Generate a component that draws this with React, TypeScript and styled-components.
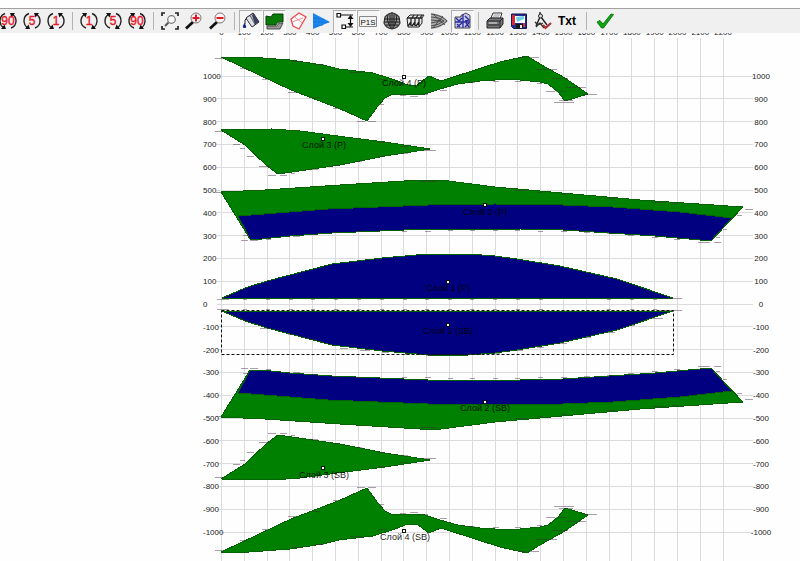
import React from 'react';
import styled, { createGlobalStyle } from 'styled-components';

const GlobalStyle = createGlobalStyle`
  * { box-sizing: border-box; }
  body { margin: 0; background: #fefefe; font-family: "Liberation Sans", Arial, sans-serif; overflow: hidden; }
`;

const Page = styled.main`
  padding-top: 8px;
`;

const Toolbar = styled.div`
  display: flex;
  align-items: center;
  height: 25px;
  border-top: 1px solid #a0a0a0;
  background: #f0f0f0;
  overflow: hidden;
`;

const Group = styled.div<{ $width: number; $bleed?: boolean }>`
  display: flex;
  flex: none;
  width: ${(p) => p.$width}px;
  margin-left: ${(p) => (p.$bleed ? '-4px' : '0')};
`;

const Separator = styled.div<{ $width?: number }>`
  display: flex;
  flex: none;
  justify-content: center;
  width: ${(p) => p.$width ?? 9}px;
  &::before {
    content: '';
    width: 1px;
    height: 18px;
    background: #b4b4b4;
  }
`;

const ToolButton = styled.button`
  display: flex;
  flex: 1;
  align-items: center;
  justify-content: center;
  min-width: 0;
  height: 23px;
  padding: 0;
  border: 1px solid transparent;
  background: transparent;
  color: #000;
  font: bold 12px "Liberation Sans", Arial, sans-serif;
  &[aria-pressed='true'] {
    border-color: #b0b0b0 #fff #fff #b0b0b0;
    background: #f6f6f6;
  }
`;

const Icon = styled.svg`
  display: block;
  flex: none;
  width: 20px;
  height: 20px;
  font-weight: normal;
`;

const Chart = styled.svg`
  display: block;
  width: 100%;
  height: auto;
  font-family: "Liberation Sans", Arial, sans-serif;
`;

const AxisText = styled.text`
  fill: #222;
  font-size: 8px;
`;

const LayerText = styled.text`
  fill: #000;
  fill-opacity: 0.9;
  font-size: 9px;
  text-anchor: middle;
`;

const RotateIcon = ({ label, cw }: { label: string; cw?: boolean }) => (
  <Icon viewBox="0 0 20 20" aria-hidden="true">
    <g transform={cw ? 'translate(20 0) scale(-1 1)' : undefined}>
      <path d="M7 2.500C3 4 1.800 7 2 10.500C2.200 13 3.200 15 5 16.500M13 17C17 15.500 18.200 12.500 18 9C17.800 6.500 16.800 5 15 3.500" fill="none" stroke="#222" strokeWidth="1.400" />
      <path d="M12 2H17L13.500 6.500ZM8 18H3L6.500 13.500Z" fill="#111" />
    </g>
    <text x="10" y="14" textAnchor="middle" fontSize="12" stroke="#e8182a" strokeWidth=".4" fill="#e8182a">{label}</text>
  </Icon>
);

const ZoomFit = () => (
  <Icon viewBox="0 0 20 20" aria-hidden="true">
    <path d="M2 5V2H5M15 2H18V5M18 15V18H15M5 18H2V15" fill="none" stroke="#222" strokeWidth="1.700" />
    <circle cx="11.500" cy="8.500" r="3.800" fill="#f8f8f8" stroke="#777" strokeWidth="1.200" />
    <path d="M8.500 11.500L5 15" stroke="#555" strokeWidth="2" />
  </Icon>
);

const Magnifier = ({ plus }: { plus?: boolean }) => (
  <Icon viewBox="0 0 20 20" aria-hidden="true">
    <path d="M9 11L2 17.500" stroke="#111" strokeWidth="2.800" />
    <circle cx="12" cy="7" r="5" fill="#fff4f4" stroke="#777" strokeWidth="1" />
    <path d={plus ? 'M8.500 7H15.500M12 3.500V10.500' : 'M8.500 7H15.500'} stroke="#e01824" strokeWidth="2" />
  </Icon>
);

const Bucket = () => (
  <Icon viewBox="0 0 20 20" aria-hidden="true">
    <path d="M5 7L12 2L18 11L11 16Z" fill="#b8bcc6" stroke="#222" />
    <path d="M11 4L13 2.500L18 10.500L14 13.500Z" fill="#39405a" />
    <path d="M5 7L9 4.500L14 13.500L11 16Z" fill="#dfe2e8" stroke="#333" strokeWidth=".700" />
    <path d="M6 7Q3 8 4 13" fill="none" stroke="#222" />
    <path d="M3.500 12C1 16 1.500 17 3.500 17S6 16 3.500 12Z" fill="#17258f" />
  </Icon>
);

const Hull = () => (
  <Icon viewBox="0 0 20 20" aria-hidden="true">
    <path d="M2 5L7 6L9 3H19V11Q13 10 12 14H2Z" fill="#087a08" stroke="#064006" />
    <path d="M3 15H13L15 12H19L16 18H3Z" fill="#999" stroke="#333" strokeWidth=".800" />
  </Icon>
);

const RedPlate = () => (
  <Icon viewBox="0 0 20 20" aria-hidden="true">
    <path d="M3 8L11 2L18 6L11 18L5 15Z" fill="#fff" stroke="#ee4a4f" strokeWidth="1.300" />
    <path d="M4 11L15 7M7 6L14 12" fill="none" stroke="#ee8a8d" strokeWidth="1" />
  </Icon>
);

const Flag = () => (
  <Icon viewBox="0 0 20 20" aria-hidden="true">
    <path d="M2 2L19 11L2 18Z" fill="#1c86ee" />
    <path d="M2 7L14 8.500M2 11H18M2 15L12 14" stroke="#1a74dc" strokeWidth=".8" />
  </Icon>
);

const Dimension = () => (
  <Icon viewBox="0 0 20 20" aria-hidden="true">
    <path d="M4 4H18M9 16H18M15.500 5V15" stroke="#111" strokeWidth="1.200" />
    <path d="M15.500 4L12.500 8H18.500ZM15.500 16L12.500 12H18.500Z" fill="#111" />
    <path d="M2 2.500H5.500V6H2ZM7 14H10.500V17.500H7Z" fill="#fff" stroke="#111" strokeWidth="1.200" />
  </Icon>
);

const PointNames = () => (
  <Icon viewBox="0 0 20 20" aria-hidden="true">
    <path d="M1.500 5.500H18.500V15.500H1.500Z" fill="#f4f4f4" stroke="#888" />
    <text x="10" y="13.500" textAnchor="middle" fontSize="8" fill="#111">P1S</text>
  </Icon>
);

const BodyLines = () => (
  <Icon viewBox="0 0 20 20" aria-hidden="true">
    <path d="M3 6Q10 -2 17 6L18 12Q16 17 10 18Q4 17 2 12Z" fill="#999" stroke="#333" strokeWidth="1.200" />
    <path d="M10 1V18M2 8H18M2 11H18M6 4Q4 10 9 17M14 4Q16 10 11 17M8 3V15M12 3V15M4 14H16" fill="none" stroke="#1c1c1c" />
  </Icon>
);

const Frames = () => (
  <Icon viewBox="0 0 20 20" aria-hidden="true">
    <path d="M2 7L5 4H19L17 7V12L14 16H3Z" fill="#e7e7e7" stroke="#222" />
    <path d="M2 7H17M6 7V15M10 7V15M14 7V15M7 7L9 4M11 7L13 4M15 7L17 4M3 15L6 11M7 15L10 11M11 15L14 11" fill="none" stroke="#222" strokeWidth="1.300" />
  </Icon>
);

const Waterlines = () => (
  <Icon viewBox="0 0 20 20" aria-hidden="true">
    <path d="M2 2Q13 3 19 10Q13 17 2 18Z" fill="#aaa" />
    <path d="M2 3Q12 4 18 10Q12 16 2 17M2 6Q10 6 15 10Q10 14 2 15M2 9L12 10L2 12M4 3L16 14M4 17L14 5" fill="none" stroke="#444" strokeWidth=".900" />
  </Icon>
);

const Pattern = () => (
  <Icon viewBox="0 0 20 20" aria-hidden="true">
    <path d="M9 4.500L14 2L18 4.500V17H3V6H9Z" fill="#c9caec" stroke="#333" strokeWidth=".900" />
    <path d="M11 3V17M3 11H18M4 7L7 10L10 7M5 16L10 12M13 5L17 9L13 10M13 16L17 12M14 12L17 16M5 13L8 16" fill="none" stroke="#2a2b9c" strokeWidth="1.300" />
  </Icon>
);

const Printer = () => (
  <Icon viewBox="0 0 20 20" aria-hidden="true">
    <path d="M6 7L8 2H17L15 8Z" fill="#fff" stroke="#333" />
    <path d="M8.500 4H15M8 6H14" stroke="#777" strokeWidth=".800" />
    <path d="M2 10L5 7H18V13L15 17H2Z" fill="#77797c" stroke="#222" />
    <path d="M2 10H15L18 7M15 10V17M3 14H14" fill="none" stroke="#222" />
    <path d="M4 12H12" stroke="#ddd" />
  </Icon>
);

const SavePicture = () => (
  <Icon viewBox="0 0 20 20" aria-hidden="true">
    <path d="M2.500 3H17.500V17.500H4.500L2.500 15.500Z" fill="#252a91" stroke="#151948" />
    <path d="M3 4H6V14H3Z" fill="#d82b38" />
    <path d="M6 5H16V12H6Z" fill="#fff" />
    <path d="M7 6L15 5V8L8 11Z" fill="#6bd0e6" />
    <path d="M7 13H14V17H7Z" fill="#181818" />
    <path d="M11 14H13V17H11Z" fill="#eee" />
    <path d="M14 12H16V16H14Z" fill="#cf3540" />
  </Icon>
);

const Compass = () => (
  <Icon viewBox="0 0 20 20" aria-hidden="true">
    <path d="M7 1V4M7 6L3 15M8 6L14 14" fill="none" stroke="#222" strokeWidth="1.400" />
    <circle cx="7.500" cy="5" r="2" fill="#ddd" stroke="#222" />
    <path d="M2 11Q5 15 10 12M3 16L7 12L11 17" fill="none" stroke="#333" strokeWidth="1.300" />
    <path d="M10 14L12.500 17L18 12" fill="none" stroke="#b22a30" strokeWidth="2" />
  </Icon>
);

const Check = () => (
  <Icon viewBox="0 0 20 20" aria-hidden="true">
    <path d="M2 11L5 9.500L8 13L16 3L18.500 3.500L8.500 17H6.500Z" fill="#12a512" stroke="#08700a" strokeWidth=".900" />
  </Icon>
);

type Tool = { name: string; face: React.ReactNode; pressed?: boolean };

const groups: { width: number; tools: Tool[] }[] = [
  { width: 72, tools: ['90', '5', '1'].map((n) => ({ name: `Rotate left ${n}°`, face: <RotateIcon label={n} /> })) },
  { width: 72, tools: ['1', '5', '90'].map((n) => ({ name: `Rotate right ${n}°`, face: <RotateIcon label={n} cw /> })) },
  {
    width: 72,
    tools: [
      { name: 'Zoom to fit', face: <ZoomFit /> },
      { name: 'Zoom in', face: <Magnifier plus /> },
      { name: 'Zoom out', face: <Magnifier /> },
    ],
  },
  {
    width: 235,
    tools: [
      { name: 'Fill', face: <Bucket />, pressed: true },
      { name: 'Hull', face: <Hull />, pressed: true },
      { name: 'Plate', face: <RedPlate /> },
      { name: 'Interior edges', face: <Flag /> },
      { name: 'Dimensions', face: <Dimension />, pressed: true },
      { name: 'Part names', face: <PointNames />, pressed: true },
      { name: 'Stations', face: <BodyLines /> },
      { name: 'Buttocks', face: <Frames /> },
      { name: 'Waterlines', face: <Waterlines /> },
      { name: 'Grid', face: <Pattern />, pressed: true },
    ],
  },
  {
    width: 96,
    tools: [
      { name: 'Print', face: <Printer /> },
      { name: 'Save image', face: <SavePicture /> },
      { name: 'Export drawing', face: <Compass /> },
      { name: 'Export text', face: 'Txt' },
    ],
  },
  { width: 24, tools: [{ name: 'Close', face: <Check /> }] },
];

const ZERO_X = 221.5;
const ZERO_Y = 304;
const STEP = 22.8;
const columns = Array.from({ length: 23 }, (_, i) => i);
const rows = Array.from({ length: 21 }, (_, i) => i - 10);

const layer4 =
  '221,57 249,57 290,60 323,65 339,69 373,73 395,80 408,85 417,85 429,76 441,81 478,69 500,62 527,56 540,64 565,78 588,94 565,101 558,92 548,84 540,82 510,79 480,81 458,84 440,89 425,94 415,95 393,94 385,98 378,106 367,121 338,108 291,90';
const layer3 = '221,130 272,129 300,131 345,137 385,142 430,149 385,156 340,165 278,174 266,165 245,145';
const layer2 =
  '221,192 265,190 340,185 420,180 441,180 495,187 540,191 640,200 743,207 711,241 655,236 563,230 520,229 428,229 332,233 290,236 262,239 250,239';
const layer2Blue =
  '238,216 328,209 428,205 495,204 563,205 613,207 680,212 732,218 711,241 655,236 563,230 520,229 428,229 332,233 290,236 262,239 250,239';
const layer1 =
  '222,298 245,288 267,281 332,264 382,258 428,254 468,254 495,256 517,259 560,266 617,279 673,298';

const marks: [number, number, number][] = [
  [215, 58, 9], [240, 68, 7], [262, 79, 6], [288, 92, 8], [312, 97, 8], [333, 108, 5], [357, 121, 8], [368, 121, 8], [380, 104, 4],
  [291, 61, 12], [315, 64, 9], [350, 72, 13], [378, 79, 9], [400, 95, 6], [410, 96, 8], [422, 94, 6], [440, 90, 7], [469, 82, 6],
  [493, 81, 6], [515, 81, 6], [537, 83, 5], [518, 57, 8], [530, 57, 9], [536, 69, 21], [552, 78, 16], [546, 91, 9], [556, 91, 10],
  [554, 102, 20], [559, 100, 14], [566, 87, 20], [583, 94, 14],
  [215, 131, 8], [233, 144, 7], [240, 148, 5], [247, 156, 7], [259, 166, 12], [268, 175, 8], [280, 175, 7], [291, 173, 4], [312, 169, 6],
  [333, 165, 6], [356, 161, 6], [378, 156, 6], [402, 153, 6], [424, 150, 12], [378, 142, 6], [400, 146, 8],
  [216, 192, 7], [243, 235, 5], [241, 240, 7], [250, 240, 8], [266, 239, 5], [293, 236, 7], [311, 234, 6], [333, 232, 6], [356, 231, 6],
  [402, 231, 5], [425, 231, 6], [448, 230, 5], [470, 230, 5], [493, 230, 5], [515, 230, 5], [538, 231, 5], [561, 231, 6], [584, 232, 6],
  [607, 233, 6], [628, 235, 6], [652, 237, 6], [674, 239, 6], [698, 242, 12], [714, 242, 7], [716, 237, 4], [723, 229, 4], [737, 215, 5], [745, 209, 8],
  [420, 181, 17], [515, 190, 12], [538, 192, 5], [561, 194, 5], [607, 198, 8], [652, 202, 14], [672, 203, 6],
  [217, 299, 12], [243, 299, 4], [266, 299, 4], [289, 299, 4], [311, 299, 4], [334, 299, 4], [357, 299, 4], [380, 299, 4], [403, 299, 4],
  [425, 299, 4], [448, 299, 4], [470, 299, 4], [493, 299, 4], [516, 299, 4], [539, 299, 4], [607, 299, 4], [630, 299, 4], [653, 299, 4], [660, 298, 22],
];

const lowerMarks: [number, number, number][] = [
  [244, 320, 5], [260, 328, 10], [288, 334, 5], [310, 339, 6], [340, 348, 8], [360, 350, 10], [382, 352, 7], [402, 354, 8],
  [426, 355, 8], [492, 353, 8], [515, 350, 8], [537, 347, 7], [556, 343, 11], [584, 337, 7], [606, 332, 9], [630, 325, 5], [652, 318, 11],
];

const layers: { name: string; x: number; textY: number; markerX: number; markerY: number }[] = [
  { name: 'Слой 4 (P)', x: 404, textY: 86, markerX: 404, markerY: 77 },
  { name: 'Слой 3 (P)', x: 324, textY: 148, markerX: 323, markerY: 139 },
  { name: 'Слой 2 (P)', x: 485, textY: 215, markerX: 485, markerY: 205 },
  { name: 'Слой 1 (P)', x: 448, textY: 291, markerX: 448, markerY: 282 },
  { name: 'Слой 1 (SB)', x: 448, textY: 334, markerX: 448, markerY: 325 },
  { name: 'Слой 2 (SB)', x: 485, textY: 411, markerX: 485, markerY: 402 },
  { name: 'Слой 3 (SB)', x: 324, textY: 478, markerX: 323, markerY: 468 },
  { name: 'Слой 4 (SB)', x: 405, textY: 540, markerX: 404, markerY: 531 },
];

const Plates = () => (
  <g stroke="#046204" strokeWidth="1">
    <g shapeRendering="crispEdges">
      <polygon points={layer4} fill="#008000" />
      <polygon points={layer3} fill="#008000" />
      <polygon points={layer2} fill="#008000" />
      <polygon points={layer2Blue} fill="#000080" />
      <polygon points={layer1} fill="#000080" />
    </g>
    <g stroke="#402840" strokeOpacity="0.450">
      {marks.map(([x, y, w]) => (
        <path key={`${x}-${y}`} d={`M${x} ${y + 0.5}h${w}`} />
      ))}
    </g>
  </g>
);

const Development = () => (
  <Chart viewBox="0 33 800 528" role="img" aria-label="Plate developments">
    <g stroke="#dcdcdf" strokeWidth="1">
      {columns.map((c) => {
        const x = Math.floor(ZERO_X + c * STEP) + 0.5;
        return <path key={c} d={`M${x} 38V561`} />;
      })}
      {rows.map((r) => {
        const y = Math.floor(ZERO_Y - r * STEP) + 0.5;
        return <path key={r} d={`M217 ${y}H753`} />;
      })}
    </g>
    {columns.map((c) => (
      <AxisText key={c} x={ZERO_X + c * STEP} y="35" textAnchor="middle">{c * 100}</AxisText>
    ))}
    {rows.map((r) => (
      <React.Fragment key={r}>
        <AxisText x="203" y={Math.round(ZERO_Y - r * STEP) + 3}>{r * 100}</AxisText>
        <AxisText x="761" y={Math.round(ZERO_Y - r * STEP) + 3} textAnchor="middle">{r * 100}</AxisText>
      </React.Fragment>
    ))}
    <Plates />
    <g transform="translate(0 609) scale(1 -1)">
      <Plates />
    </g>
    <g stroke="#402840" strokeOpacity="0.450">
      {lowerMarks.map(([x, y, w]) => (
        <path key={`${x}-${y}`} d={`M${x} ${y + 0.5}h${w}`} />
      ))}
    </g>
    <path d="M221.500 310.500H673.500V354.500H221.500Z" fill="none" stroke="#111" strokeDasharray="3 2" />
    {layers.map((l) => (
      <g key={l.name}>
        <LayerText x={l.x} y={l.textY}>{l.name}</LayerText>
        <rect x={l.markerX - 1.5} y={l.markerY - 1.5} width="3" height="3" fill="#fff" stroke="#111" />
      </g>
    ))}
  </Chart>
);

export default function App() {
  return (
    <>
      <GlobalStyle />
      <Page>
        <Toolbar role="toolbar" aria-label="Developments">
          {groups.map((group, i) => (
            <React.Fragment key={i}>
              {i > 0 && <Separator $width={i === 5 ? 14 : 9} />}
              <Group $width={group.width} $bleed={i === 0}>
                {group.tools.map((tool) => (
                  <ToolButton key={tool.name} type="button" aria-label={tool.name} aria-pressed={tool.pressed}>
                    {tool.face}
                  </ToolButton>
                ))}
              </Group>
            </React.Fragment>
          ))}
        </Toolbar>
        <Development />
      </Page>
    </>
  );
}
